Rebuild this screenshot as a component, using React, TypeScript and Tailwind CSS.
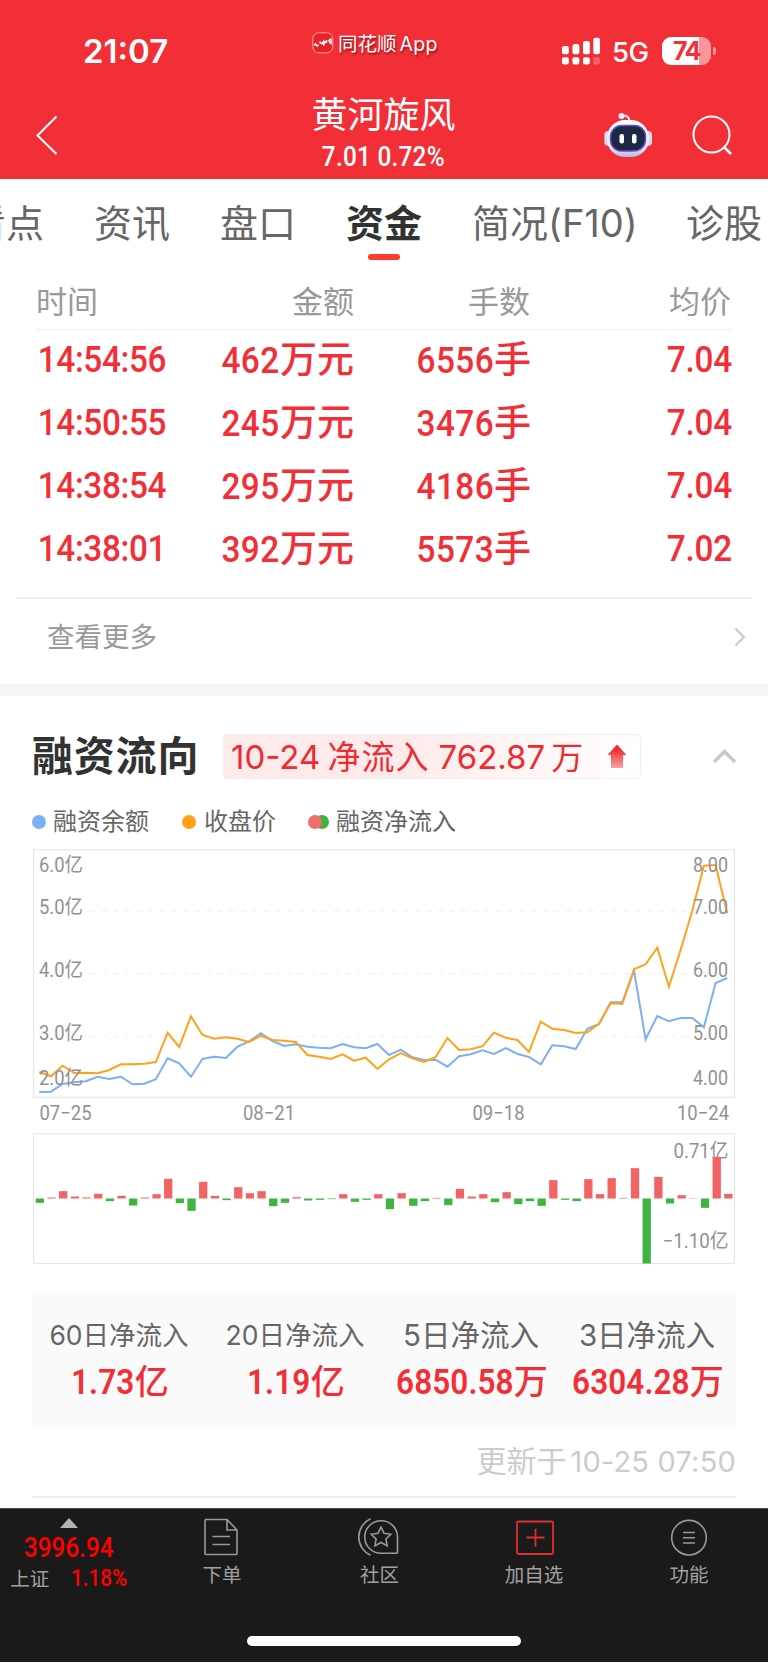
import type { ReactNode } from 'react';

type Trade = {
  time: string;
  amount: string;
  lots: string;
  price: string;
};

const tabs = ['看点', '资讯', '盘口', '资金', '简况(F10)', '诊股'];

const trades: Trade[] = [
  { time: '14:54:56', amount: '462', lots: '6556', price: '7.04' },
  { time: '14:50:55', amount: '245', lots: '3476', price: '7.04' },
  { time: '14:38:54', amount: '295', lots: '4186', price: '7.04' },
  { time: '14:38:01', amount: '392', lots: '5573', price: '7.02' },
];

const stats = [
  { label: '60日净流入', value: '1.73', unit: '亿', small: true },
  { label: '20日净流入', value: '1.19', unit: '亿', small: true },
  { label: '5日净流入', value: '6850.58', unit: '万', small: false },
  { label: '3日净流入', value: '6304.28', unit: '万', small: false },
];

// heights in thirds of a pixel, measured down from the top of the chart
const closePrice = [
  696, 709, 677, 699, 698, 700, 690, 673, 673, 671, 666, 578, 621, 529, 585,
  596, 592, 596, 606, 587, 600, 602, 606, 645, 650, 657, 643, 662, 653, 687,
  658, 639, 655, 666, 651, 594, 630, 628, 619, 578, 593, 600, 636, 545, 566,
  570, 579, 577, 551, 490, 492, 388, 373, 323, 440, 330, 212, 77, 75, 220,
];

const balance = [
  756, 755, 732, 727, 724, 710, 717, 710, 733, 731, 718, 655, 670, 710, 657,
  650, 654, 620, 604, 580, 603, 618, 613, 620, 623, 625, 612, 622, 625, 612,
  645, 629, 652, 660, 659, 680, 649, 643, 631, 642, 624, 642, 651, 673, 616,
  619, 627, 566, 552, 487, 486, 392, 598, 528, 544, 534, 534, 562, 429, 414,
];

const inflow = [
  -13, 3, 22, 6, 3, 14, -8, 8, -21, 3, 13, 59, -14, -37, 50, 8, -5, 34, 16, 22,
  -23, -13, 4, -6, -4, -2, 13, -10, -4, 13, -32, 16, -22, -8, 2, -20, 29, 6, 13,
  -11, 19, -17, -8, -22, 55, -4, -8, 58, 13, 61, 2, 91, -195, 65, -15, 10, 1,
  -28, 125, 14,
];

// baselines of the left (balance) and right (price) axis labels
const axis = [
  { y: 23, left: '6.0', right: '8.00' },
  { y: 64.5, left: '5.0', right: '7.00' },
  { y: 127.5, left: '4.0', right: '6.00' },
  { y: 190.5, left: '3.0', right: '5.00' },
  { y: 236, left: '2.0', right: '4.00' },
];

const dates = [
  { x: 7.5, text: '07−25' },
  { x: 211, text: '08−21' },
  { x: 440.5, text: '09−18' },
  { x: 645, text: '10−24' },
];

const STEP = 11.66;

const toPoints = (values: number[]) =>
  values
    .map((v, i) => `${(7.3 + i * STEP).toFixed(1)},${(v / 3 - 9).toFixed(1)}`)
    .join(' ');

// narrow figures
const Num = ({ children, className = '' }: { children: ReactNode; className?: string }) => (
  <span className={`inline-block scale-x-90 font-['Roboto',sans-serif] ${className}`}>{children}</span>
);

const StatusBar = () => (
  <div className="flex h-[97px] items-start">
    <div className="ml-[83px] mt-[31px] w-[229px] text-[33px] font-semibold leading-[40px]">
      21:07
    </div>
    <div className="mt-[32px] flex w-[250px] items-start">
      <svg width="22" height="22" viewBox="0 0 22 22" fill="none">
        <rect x="0.8" y="0.8" width="20" height="20" rx="6" fill="#ea2228" stroke="#f9a0a2" />
        <path
          d="M2 13.500l1.600-1.500 1.400 2 1.500-1.200M7.500 9.500l1.200 2M9.500 12l2-2.500v4l2-4.500M14.500 11V8M16.500 9l2.500-2.500M17 9.500l2 2V7"
          stroke="#fff"
          strokeWidth="1.500"
        />
      </svg>
      <span className="ml-1 mt-[1px] text-[19.5px] leading-[22px] [text-shadow:1px_2px_2px_rgba(90,0,0,0.6)]">
        同花顺<span className="ml-[3px] tracking-[0.3px]">App</span>
      </span>
    </div>
    <svg className="mt-[37px]" width="38" height="28" viewBox="0 0 38 28" fill="#fff">
      <rect x="0" y="9" width="6.800" height="8.300" rx="2" />
      <rect x="10.500" y="7" width="6.800" height="10.300" rx="2" />
      <rect x="21" y="4" width="6.800" height="13.300" rx="2" />
      <rect x="31.300" y="0.800" width="6.600" height="16.500" rx="2" />
      <rect x="0" y="20.300" width="6.800" height="7.200" rx="2" />
      <rect x="10.500" y="20.300" width="6.800" height="7.200" rx="2" />
      <rect x="21" y="20.300" width="6.800" height="7.200" rx="2" />
      <rect x="31.300" y="20.300" width="6.600" height="7.200" rx="2" opacity="0.25" />
    </svg>
    <span className="ml-[12px] mt-[36px] w-[50px] text-[27.5px] font-medium leading-[32px] tracking-[-0.6px]">5G</span>
    <div className="mt-[37px] flex items-center">
      <div className="flex h-[28px] w-[49px] items-center justify-center rounded-[9px] bg-[linear-gradient(90deg,#fff_76%,#f8979b_76%)] pt-[2px] text-[25px] font-bold tracking-[-1.5px] text-[#f23037]">
        74
      </div>
      <div className="ml-[2px] h-[8px] w-[3px] rounded-r-full bg-[#f8979b]" />
    </div>
  </div>
);

const Robot = () => (
  <svg width="50" height="46" viewBox="0 0 50 46" fill="none">
    <defs>
      <linearGradient id="shell" x1="0" y1="0" x2="0" y2="1">
        <stop offset="0" stopColor="#ffffff" />
        <stop offset="0.75" stopColor="#eceaf9" />
        <stop offset="1" stopColor="#b7b3e4" />
      </linearGradient>
      <linearGradient id="rim" x1="0" y1="0" x2="1" y2="1">
        <stop offset="0" stopColor="#5b6bd8" />
        <stop offset="0.6" stopColor="#5a3fb0" />
        <stop offset="1" stopColor="#8a5cf0" />
      </linearGradient>
    </defs>
    <path d="M19 4c5-1 7 1 7.500 5" stroke="#e6e4f5" strokeWidth="2" />
    <circle cx="18.500" cy="4" r="3" fill="#efeefb" />
    <rect x="1.300" y="19" width="8" height="15" rx="4" fill="#d4d6f3" />
    <rect x="41" y="19" width="8" height="15" rx="4" fill="#d4d6f3" />
    <rect x="4" y="8" width="42" height="37" rx="18" fill="url(#shell)" />
    <rect x="7.500" y="13.500" width="35" height="25.500" rx="11" fill="#1f2747" stroke="url(#rim)" strokeWidth="1.500" />
    <rect x="16.500" y="22" width="4.500" height="9.500" rx="2" fill="#fff" />
    <rect x="29" y="22" width="4.500" height="9.500" rx="2" fill="#fff" />
  </svg>
);

const NavBar = () => (
  <div className="flex h-[82px] items-start">
    <svg className="ml-[35px] mt-[17px]" width="24" height="42" viewBox="0 0 24 42" fill="none">
      <path d="M21.500 2.500L2.500 21.500L21.500 40" stroke="#fff" strokeWidth="2" />
    </svg>
    <div className="ml-[204px] flex w-[241px] flex-col items-center">
      <div className="text-[36px] leading-[36px]">黄河旋风</div>
      <Num className="mt-[9px] text-[27px] font-medium leading-[30px] tracking-[0.3px]">
        7.01 0.72%
      </Num>
    </div>
    <div className="ml-[99px] mt-[15px] flex">
      <Robot />
      <svg className="ml-[39px] mt-[2px]" width="42" height="42" viewBox="0 0 42 42" fill="none" stroke="#fff">
        <circle cx="19.500" cy="20.500" r="18" strokeWidth="2" />
        <path d="M32 33l7 7" strokeWidth="2.500" />
      </svg>
    </div>
  </div>
);

const Tabs = () => (
  <div className="flex h-[91px] items-start gap-[50px] overflow-hidden pt-[22px]">
    {tabs.map((tab) => (
      <div
        key={tab}
        className={`flex shrink-0 flex-col items-center whitespace-nowrap text-[38px] leading-[44px] first:-ml-[32px] ${
          tab === '资金' ? 'font-bold text-[#323232]' : 'text-[#666]'
        }`}
      >
        {tab === '简况(F10)' ? <span className="w-[164px]">{tab}</span> : tab}
        {tab === '资金' && <i className="mt-[9px] h-[6px] w-8 rounded-full bg-[#ff3b30]" />}
      </div>
    ))}
  </div>
);

const TradeTable = () => (
  <div className="mx-9 h-[327px]">
    <div className="grid h-[60px] grid-cols-[134px_184px_176px_202px] items-start border-b border-[#f0f0f0] pt-[14px] text-right text-[31px] leading-[36px] text-[#999]">
      <span className="text-left">时间</span>
      <span>金额</span>
      <span>手数</span>
      <span className="pr-[1px]">均价</span>
    </div>
    {trades.map((trade) => (
      <div
        key={trade.time}
        className="grid h-[63px] grid-cols-[134px_184px_176px_202px] items-start text-right text-[37px] font-medium leading-[60px] text-[#f22f37]"
      >
        <Num className="origin-left whitespace-nowrap pl-[2px] text-left tracking-[-0.4px]">{trade.time}</Num>
        <span>
          <Num className="origin-right tracking-[0.5px]">{trade.amount}</Num>万元
        </span>
        <span className="-mr-[1px]">
          <Num className="origin-right tracking-[0.5px]">{trade.lots}</Num>手
        </span>
        <Num className="origin-right tracking-[-0.2px]">{trade.price}</Num>
      </div>
    ))}
  </div>
);

const MoreLink = () => (
  <div className="mx-4 flex h-[87px] items-start justify-between border-t-2 border-[#f0f0f0] pl-[31px] pr-[6px] text-[27.5px] leading-[34px] text-[#999]">
    <span className="mt-[21px]">查看更多</span>
    <svg className="mt-[28px]" width="12" height="20" viewBox="0 0 12 20" fill="none">
      <path d="M1.500 1.500l8.500 8.500-8.500 8.500" stroke="#c8c8c8" strokeWidth="2.200" />
    </svg>
  </div>
);

const SectionHeader = () => (
  <div className="flex h-[45px] items-center">
    <h2 className="w-[191px] shrink-0 whitespace-nowrap text-[41px] font-bold leading-[45px] tracking-[0.8px] text-[#323232]">
      融资流向
    </h2>
    <div className="flex h-[45px] w-[418px] shrink-0 items-center whitespace-nowrap rounded-[4px] border border-[#fdeaea] bg-linear-to-r from-[#fdeaea] from-40% to-white pl-[7px] text-[33px] leading-[43px] text-[#ee2c30]">
      <span className="w-[376px] shrink-0 pt-[1px]">
        10-24 <span className="-ml-[2px] tracking-[1px]">净流入</span>
        <span className="ml-[9px]">762.87</span>
        <span className="ml-[6px] text-[32px]">万</span>
      </span>
      <svg className="shrink-0" width="20" height="25" viewBox="0 0 20 25">
        <defs>
          <linearGradient id="arrow" x1="0" y1="0" x2="0" y2="1">
            <stop offset="0.2" stopColor="#ee2c30" />
            <stop offset="1" stopColor="#f9a3a5" />
          </linearGradient>
        </defs>
        <path d="M10 0.500L19.500 11H16v13H4V11H0.500z" fill="url(#arrow)" />
      </svg>
    </div>
    <svg className="ml-[71px] shrink-0" width="26" height="18" viewBox="0 0 26 18" fill="none">
      <path d="M2 14L12.500 3.500L23 14" stroke="#c8c8c8" strokeWidth="3.500" />
    </svg>
  </div>
);

const Legend = () => (
  <div className="flex h-[30px] items-center text-[24px] leading-[30px] text-[#666]">
    <i className="mr-[7px] size-[14px] rounded-full bg-[#7cb0f5]" />
    <span className="w-[129px]">融资余额</span>
    <i className="mr-[8px] size-[14px] rounded-full bg-[#ffa21a]" />
    <span className="w-[104px]">收盘价</span>
    <i className="z-10 size-[14px] rounded-full bg-[#f06e6e]" />
    <i className="-ml-[7px] mr-[7px] size-[14px] rounded-full bg-[#3fb440]" />
    <span>融资净流入</span>
  </div>
);

const BalanceChart = () => (
  <svg
    className="block overflow-visible font-['Roboto','Noto_Sans_CJK_SC',sans-serif]"
    width="704"
    height="284"
    viewBox="0 0 704 284"
    fill="none"
  >
    <rect x="1.500" y="0.800" width="701" height="247.500" stroke="#e6e6e6" strokeWidth="1.200" />
    {[62, 124.7, 187.7].map((y) => (
      <path key={y} d={`M58 ${y}H700`} stroke="#f5f5f5" strokeWidth="1.500" strokeDasharray="5.500 6.100" />
    ))}
    <polyline points={toPoints(balance)} stroke="#7cb0f5" strokeWidth="2" />
    <polyline points={toPoints(closePrice)} stroke="#ffa21a" strokeWidth="2" />
    <g fill="#919191" fontSize="20.500">
      {axis.map(({ y, left, right }) => (
        <g key={y}>
          <text x="7" y={y} textLength="44" lengthAdjust="spacingAndGlyphs">
            {left}亿
          </text>
          <text x="661" y={y} textLength="35" lengthAdjust="spacingAndGlyphs">
            {right}
          </text>
        </g>
      ))}
      {dates.map(({ x, text }) => (
        <text key={text} x={x} y="271" textLength="52" lengthAdjust="spacingAndGlyphs">
          {text}
        </text>
      ))}
    </g>
  </svg>
);

const InflowChart = () => (
  <svg
    className="block overflow-visible font-['Roboto','Noto_Sans_CJK_SC',sans-serif]"
    width="704"
    height="132"
    viewBox="0 0 704 132"
    fill="none"
  >
    <rect x="1.500" y="0.800" width="701" height="129.700" stroke="#e6e6e6" strokeWidth="1.200" />
    <g fill="#919191" fontSize="20.500">
      <text x="641.500" y="24.500" textLength="55" lengthAdjust="spacingAndGlyphs">0.71亿</text>
      <text x="630.500" y="115" textLength="66" lengthAdjust="spacingAndGlyphs">−1.10亿</text>
    </g>
    {inflow.map((v, i) => (
      <rect
        key={i}
        x={3.7 + i * 11.67}
        y={v > 0 ? 65.5 - v / 3 : 65.5}
        width="8.300"
        height={Math.abs(v) / 3}
        fill={v > 0 ? '#f26363' : '#3fb440'}
      />
    ))}
  </svg>
);

const Stats = () => (
  <div className="grid h-[132px] grid-cols-4 bg-[#fafafa] pt-[22px] text-center">
    {stats.map(({ label, value, unit, small }) => (
      <div key={label}>
        <div
          className={`-ml-[2px] whitespace-nowrap leading-[40px] text-[#666] ${
            small ? 'text-[26.5px]' : 'text-[29.5px]'
          }`}
        >
          {label}
        </div>
        <div className="mt-[6px] whitespace-nowrap text-[34px] font-medium leading-[42px] text-[#f22f37]">
          <Num
            className={`origin-right text-[35px] font-semibold tracking-[0.1px] ${small ? '-ml-[7px]' : '-ml-[13px]'}`}
          >
            {value}
          </Num>
          {unit}
        </div>
      </div>
    ))}
  </div>
);

const BottomBar = () => (
  <div className="h-[154px] border-t border-[#4a4a4a] bg-[#1a1a1a] text-[19.5px] leading-[24px] text-[#a0a0a0]">
    <div className="flex h-[127px] items-start">
      <div className="flex w-[138px] flex-col items-center pt-[9px]">
        <svg width="18" height="10" viewBox="0 0 18 10">
          <path d="M9 0l9 10H0z" fill="#b3b3b3" />
        </svg>
        <Num className="mt-[5px] text-[27px] font-medium leading-[30px] text-[#f00]">3996.94</Num>
        <div className="mt-[4px] flex gap-[22px]">
          <span>上证</span>
          <Num className="-mr-[6px] origin-left text-[23px] font-medium text-[#f00]">1.18%</Num>
        </div>
      </div>
      <div className="flex w-[168px] flex-col items-center pt-[9px]">
        <svg className="mr-[3px]" width="36" height="38" viewBox="0 0 36 38" fill="none" stroke="#999" strokeWidth="1.600">
          <path d="M3 1.500H24L34 12V35.500q0 1-1 1H3q-1 0-1-1V2.500q0-1 1-1zM24 1.500V12H34M9.500 18.500h17.500M9.500 26.500h17.500" />
        </svg>
        <span className="mt-[7px]">下单</span>
      </div>
      <div className="flex w-[147px] flex-col items-center pt-[9px]">
        <svg className="mr-[3px]" width="42" height="38" viewBox="0 0 42 38" fill="none" stroke="#999" strokeWidth="1.600">
          <path d="M13.500 0.800A20 20 0 0 0 13.500 37.200M24 2.700a16.300 16.300 0 1 0 0 32.600h15.500q1 0 1-1V19A16.300 16.300 0 0 0 24 2.700z" />
          <path d="M24 9l3 6.200 6.800 1-4.900 4.800 1.200 6.700L24 24.500l-6.100 3.200 1.200-6.700-4.900-4.800 6.800-1z" />
        </svg>
        <span className="mt-[7px]">社区</span>
      </div>
      <div className="flex w-[162px] flex-col items-center pt-[9px]">
        <svg className="ml-[2px]" width="38" height="38" viewBox="0 0 38 38" fill="none" stroke="#e02d2d" strokeWidth="1.800">
          <rect x="1" y="3.500" width="36" height="32.500" rx="1.200" />
          <path d="M10.500 19.500h18M19.500 10.800v18" />
        </svg>
        <span className="mt-[7px]">加自选</span>
      </div>
      <div className="flex w-[148px] flex-col items-center pt-[9px]">
        <svg width="38" height="38" viewBox="0 0 38 38" fill="none" stroke="#999" strokeWidth="1.600">
          <circle cx="19" cy="19.700" r="17.300" />
          <path d="M13 14.500h12M13 19.700h12M13 25h12" />
        </svg>
        <span className="mt-[7px]">功能</span>
      </div>
    </div>
    <div className="mx-auto h-[10px] w-[274px] rounded-full bg-white" />
  </div>
);

export default function App() {
  return (
    <div className="h-[1663px] w-[768px] overflow-hidden bg-white font-['Inter','Noto_Sans_CJK_SC',sans-serif]">
      <header className="h-[179px] bg-[#f22f37] text-white">
        <StatusBar />
        <NavBar />
      </header>
      <Tabs />
      <TradeTable />
      <MoreLink />
      <div className="h-3 bg-[#f4f4f4]" />
      <section className="mx-8 h-[812px] pt-[38px]">
        <SectionHeader />
        <div className="mt-[28px]">
          <Legend />
        </div>
        <div className="mt-[12px]">
          <BalanceChart />
        </div>
        <InflowChart />
        <div className="mt-[28px]">
          <Stats />
        </div>
        <div className="mt-[15px] h-[56px] text-right text-[30px] leading-[42px] text-[#ccc]">
          更新于<span className="ml-1 text-[29px] tracking-[0.2px]">10-25 07:50</span>
        </div>
        <div className="h-[2px] bg-[#f0f0f0]" />
      </section>
      <BottomBar />
    </div>
  );
}
